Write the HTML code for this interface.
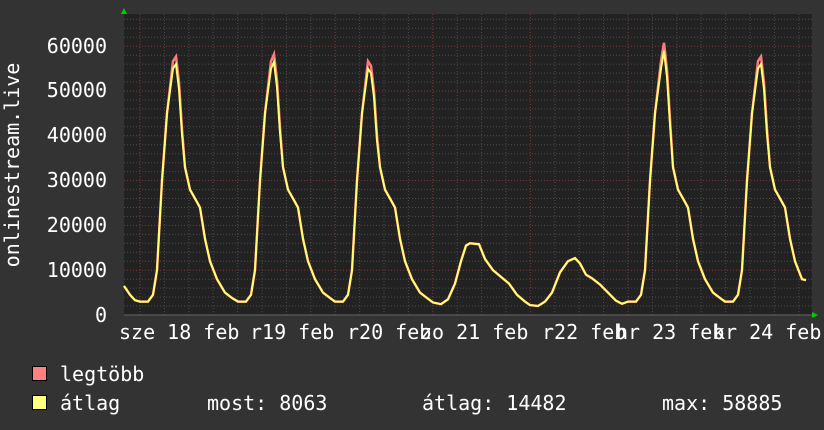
<!DOCTYPE html>
<html><head><meta charset="utf-8"><style>
html,body{margin:0;padding:0;background:#333;width:824px;height:430px;overflow:hidden}
svg text{font-family:"DejaVu Sans Mono","Liberation Mono",monospace;font-size:20px;fill:#fff}
</style></head><body>
<svg id="s" width="824" height="430" xmlns="http://www.w3.org/2000/svg">
<rect x="0" y="0" width="824" height="430" fill="#333"/>
<rect x="124" y="14" width="688" height="301" fill="#222"/>
<g id="grid"></g>
<polyline id="red" fill="none" stroke="#ff7b7b" stroke-width="2.5"/>
<polyline id="yel" fill="none" stroke="#ffff70" stroke-width="2"/>
<line x1="124" y1="315" x2="812" y2="315" stroke="#666" stroke-width="1"/>
<polygon points="121,14 127,14 124,8" fill="#0c0"/>
<polygon points="812,312 812,318 818,315" fill="#0c0"/>
<g text-anchor="end">
<text x="107" y="322">0</text>
<text x="107" y="277">10000</text>
<text x="107" y="232">20000</text>
<text x="107" y="187">30000</text>
<text x="107" y="142">40000</text>
<text x="107" y="97">50000</text>
<text x="107" y="53">60000</text>
</g>
<text transform="translate(19,165) rotate(-90)" text-anchor="middle">onlinestream.live</text>
<g>
<text x="119" y="339">sze 18 feb</text>
<text x="250" y="339">r19 feb</text>
<text x="347" y="339">r20 feb</text>
<text x="420" y="339">zo 21 feb</text>
<text x="542" y="339">r22 feb</text>
<text x="616" y="339">hr 23 feb</text>
<text x="713" y="339">kr 24 feb</text>
</g>
<rect x="32.5" y="366.5" width="14" height="14" fill="#ff8080" stroke="#000"/>
<rect x="32.5" y="395.5" width="14" height="14" fill="#ffff80" stroke="#000"/>
<text x="60" y="381">legtöbb</text>
<text x="60" y="410">átlag</text>
<text x="207" y="410">most: 8063</text>
<text x="422" y="410">átlag: 14482</text>
<text x="662" y="410">max: 58885</text>
</svg>
<script>
var g=document.getElementById('grid'),h='';
function Y(v){return 315-v*0.00448;}
for(var v=2000;v<=66000;v+=2000){var y=Y(v);if(y<14)break;var maj=v%10000==0;
h+='<line x1="124" x2="812" y1="'+y.toFixed(1)+'" y2="'+y.toFixed(1)+'" stroke="'+(maj?'#7a3a3a':'#4a4a4a')+'" stroke-dasharray="1,2"/>';}
for(var x=140-97.6;x<812;x+=24.4){if(x<124)continue;var d=Math.abs(((x-140)/97.6)-Math.round((x-140)/97.6))<0.01;
h+='<line y1="14" y2="315" x1="'+x.toFixed(1)+'" x2="'+x.toFixed(1)+'" stroke="'+(d?'#7a3a3a':'#4a4a4a')+'" stroke-dasharray="1,2"/>';}
g.innerHTML=h;
var big=[[-16,6500],[-10,4500],[-5,3300],[0,3000],[8,3000],[13,4500],[17,10000],[22,30000],[27,45000],[33,55000],[36,1],[39,0.9],[42,0.72],[45,33000],[50,28000],[55,26000],[60,24000],[65,17000],[70,12000],[77,8000],[85,5000],[92,3800]];
var pts=[];
function addBig(T,P,first,r){for(var i=0;i<big.length;i++){var o=big[i][0],v=big[i][1];if(!first&&o<0)continue;
if(v<=1)v=P*v;if(r&&o>=30&&o<=42)v*=1.03;pts.push([T+o,v]);}}
function build(r){pts=[];
addBig(140,56000,true,r);addBig(238,56500,false,r);addBig(335,54000,false,r);
var T=433;[[0,2800],[8,2400],[15,3500],[22,7000],[28,12000],[33,15500],[37,16000],[46,15800],[52,12500],[60,10000],[68,8500],[76,7000],[84,4500],[92,3000]].forEach(function(p){pts.push([T+p[0],p[1]]);});
T=530;[[0,2200],[8,2000],[15,3000],[22,5000],[30,9500],[38,12000],[45,12700],[50,11500],[56,9000],[62,8200],[70,6800],[78,5000],[86,3200],[92,2500]].forEach(function(p){pts.push([T+p[0],p[1]]);});
addBig(628,59000,false,r);
var T2=725;big.forEach(function(b){var o=b[0],v=b[1];if(o<0||o>81)return;if(v<=1)v=56000*v;if(r&&o>=30&&o<=42)v*=1.03;pts.push([T2+o,v]);});
pts.push([806,7800]);
return pts.map(function(p){return p[0].toFixed(1)+','+Y(p[1]).toFixed(1)}).join(' ');}
document.getElementById('red').setAttribute('points',build(true));
document.getElementById('yel').setAttribute('points',build(false));
</script>
</body></html>
